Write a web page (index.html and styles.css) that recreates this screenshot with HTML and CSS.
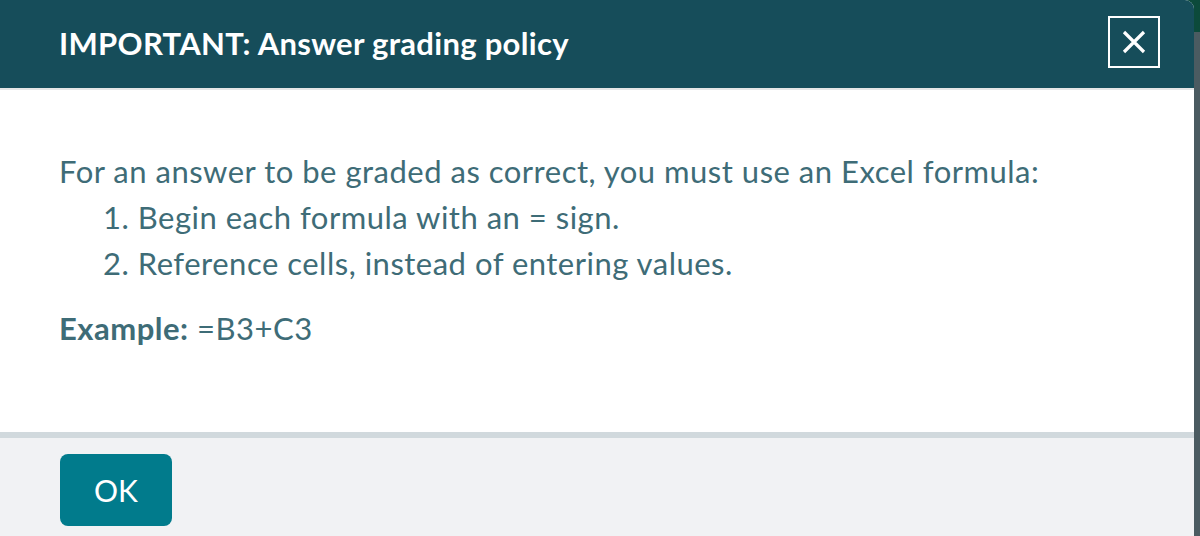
FILE: index.html
```html
<!DOCTYPE html>
<html lang="en">
<head>
  <meta charset="UTF-8">
  <title>Answer grading policy</title>
  <link rel="stylesheet" href="styles.css">
</head>
<body>
  <div class="modal">
    <div class="modal-header">
      <h2>IMPORTANT: Answer grading policy</h2>
      <button class="close" aria-label="Close">
        <svg width="24" height="24" viewBox="0 0 24 24"><path d="M2 2 L22 22 M22 2 L2 22" stroke="#fff" stroke-width="3.2" fill="none"/></svg>
      </button>
    </div>
    <div class="modal-body">
      <p>For an answer to be graded as correct, you must use an Excel formula:</p>
      <ol>
        <li>Begin each formula with an = sign.</li>
        <li>Reference cells, instead of entering values.</li>
      </ol>
      <p class="example"><strong>Example:</strong> =B3+C3</p>
    </div>
    <div class="modal-footer">
      <button class="ok">OK</button>
    </div>
  </div>
</body>
</html>
```

FILE: styles.css
```css
* {
  box-sizing: border-box;
}
body {
  margin: 0;
  height: 536px;
  overflow: hidden;
  background: linear-gradient(to bottom, #0c4a3b 0, #0c4a3b 32px, #4b5b61 32px);
  font-family: 'Lato', sans-serif;
}
.modal {
  width: 1194px;
  height: 536px;
  background: #fff;
  border-top-right-radius: 9px;
  overflow: hidden;
  display: flex;
  flex-direction: column;
}
.modal-header {
  background: #164d5a;
  height: 90px;
  border-bottom: 2px solid #e6e6e6;
  display: flex;
  align-items: center;
  justify-content: space-between;
  padding: 0 34px 0 59px;
  flex-shrink: 0;
}
.modal-header h2 {
  margin: 0;
  color: #fff;
  font-size: 31px;
  font-weight: 700;
  letter-spacing: 0.3px;
  padding-bottom: 2px;
}
.close {
  width: 52px;
  height: 52px;
  border: 2px solid #fff;
  background: transparent;
  padding: 0;
  display: flex;
  align-items: center;
  justify-content: center;
  margin-top: -4px;
}
.modal-body {
  flex: 1;
  padding: 58px 59px 0;
  color: #3e6c77;
  font-size: 31px;
  letter-spacing: 0.5px;
}
.modal-body p {
  margin: 0;
  line-height: 46px;
}
.modal-body ol {
  margin: 0;
  padding-left: 44px;
  list-style-position: inside;
}
.modal-body li {
  line-height: 46px;
}
.modal-body .example {
  margin-top: 19px;
}
.modal-footer {
  height: 104px;
  background: #f1f2f4;
  border-top: 6px solid #d1d9dd;
  padding: 16px 60px 0;
  flex-shrink: 0;
}
.ok {
  width: 112px;
  height: 72px;
  background: #017b8c;
  color: #fff;
  border: none;
  border-radius: 8px;
  font-family: 'Lato', sans-serif;
  font-size: 30px;
}
```
